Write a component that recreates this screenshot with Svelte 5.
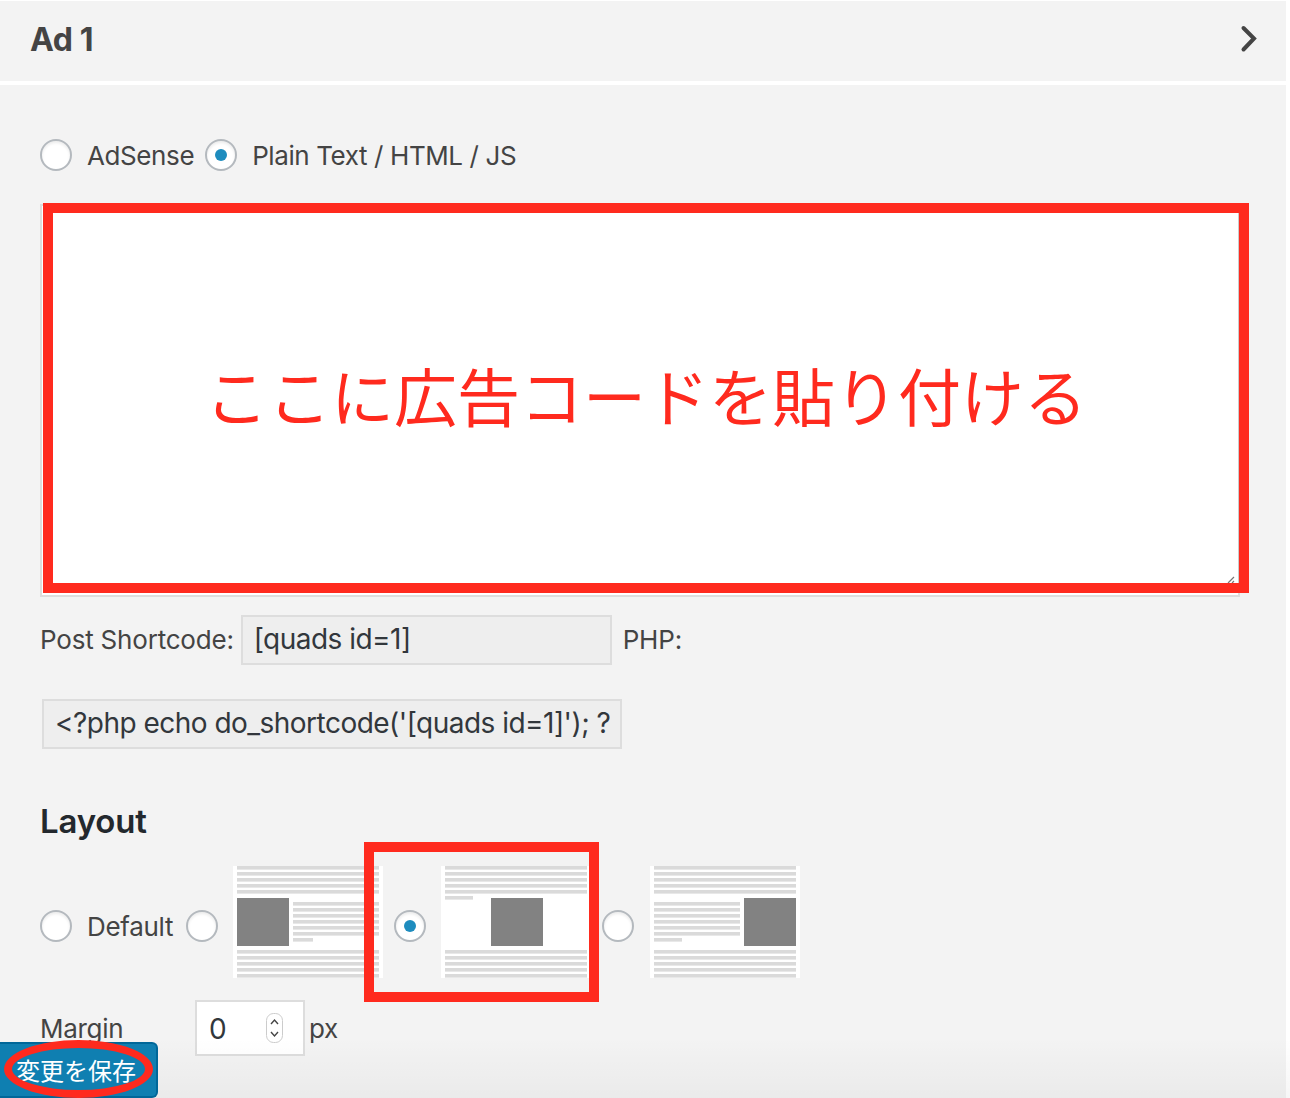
<script lang="ts">
  // line rows inside the 150x112 layout thumbnails
  const topRows = [0, 6, 12, 18, 24];
  const bottomRows = [84, 90, 96, 102, 108];
  const sideRows = [36, 42, 48, 54, 60, 66];
</script>

{#snippet thumb(kind: string)}
  <svg class="thumb" width="150" height="112" viewBox="0 0 150 112">
    <rect width="150" height="112" fill="#fff" />
    {#each topRows as y}
      <rect x="4" {y} width="142" height="3.6" fill="#dadada" />
    {/each}
    {#each bottomRows as y}
      <rect x="4" {y} width="142" height="3.6" fill="#dadada" />
    {/each}
    {#if kind === 'left'}
      <rect x="4" y="32" width="52" height="48" fill="#828282" />
      {#each sideRows as y}
        <rect x="60" {y} width="86" height="3.6" fill="#dadada" />
      {/each}
      <rect x="60" y="72" width="20" height="3.6" fill="#dadada" />
    {:else if kind === 'center'}
      <rect x="4" y="30" width="28" height="3.6" fill="#dadada" />
      <rect x="50" y="32" width="52" height="48" fill="#828282" />
    {:else}
      <rect x="94" y="32" width="52" height="48" fill="#828282" />
      {#each sideRows as y}
        <rect x="4" {y} width="86" height="3.6" fill="#dadada" />
      {/each}
      <rect x="4" y="72" width="28" height="3.6" fill="#dadada" />
    {/if}
  </svg>
{/snippet}

<div class="page">
  <header class="head">
    <h2>Ad 1</h2>
    <svg class="chevron" width="20" height="30" viewBox="0 0 20 30">
      <path d="M4.500 4 L15 14.500 L4.500 25.500" fill="none" stroke="#444" stroke-width="4" stroke-linecap="round" />
    </svg>
  </header>

  <section class="panel">
    <div class="type-row">
      <input type="radio" name="type" />
      <label for="">AdSense</label>
      <input type="radio" name="type" checked />
      <label for="">Plain Text / HTML / JS</label>
    </div>

    <div class="code-wrap">
      <textarea class="code"></textarea>
      <svg class="grip" width="8" height="8" viewBox="0 0 8 8">
        <path d="M1 7 L7 1 M5 7 L7 5" stroke="#777" stroke-width="1.200" />
      </svg>
      <div class="note">ここに広告コードを貼り付ける</div>
    </div>

    <div class="short-row">
      <span>Post Shortcode:</span>
      <input class="ro short" readonly value="[quads id=1]" />
      <span class="php">PHP:</span>
    </div>

    <input class="ro php-code" readonly value={"<?php echo do_shortcode('[quads id=1]'); ?>"} />

    <h3>Layout</h3>

    <div class="layout-row">
      <input type="radio" name="layout" />
      <label for="" class="default">Default</label>
      <input type="radio" name="layout" />
      {@render thumb('left')}
      <input type="radio" name="layout" checked />
      {@render thumb('center')}
      <input type="radio" name="layout" />
      {@render thumb('right')}
      <div class="mark"></div>
    </div>

    <div class="margin-row">
      <span class="margin-label">Margin</span>
      <div class="num">
        <span>0</span>
        <svg width="17" height="30" viewBox="0 0 17 30">
          <rect x="0.500" y="0.500" width="16" height="29" rx="7" fill="#fff" stroke="#ccc" />
          <path d="M5 11 L8.500 7 L12 11 M5 19 L8.500 23 L12 19" fill="none" stroke="#444" stroke-width="1.400" />
        </svg>
      </div>
      <span class="unit">px</span>
    </div>
  </section>

  <div class="fade"></div>

  <div class="save-wrap">
    <button class="save">変更を保存</button>
    <div class="ring"></div>
  </div>
</div>

<style>
  :global(body) {
    margin: 0;
    background: #fff;
    overflow: hidden;
  }

  .page {
    position: relative;
    width: 1290px;
    height: 1098px;
    overflow: hidden;
    padding-top: 1px;
    box-sizing: border-box;
    font-family: Inter, "Noto Sans CJK JP", sans-serif;
    font-size: 26px;
    letter-spacing: -0.3px;
    color: #444;
  }

  .head {
    width: 1286px;
    height: 80px;
    background: #f3f3f3;
    display: flex;
    align-items: center;
    justify-content: space-between;
    box-sizing: border-box;
    padding: 0 27px 4px 30px;
  }

  h2 {
    margin: 0;
    font-size: 32px;
    font-weight: 700;
    letter-spacing: -0.4px;
  }

  .chevron {
    display: block;
  }

  .panel {
    width: 1286px;
    height: 1013px;
    margin-top: 4px;
    background: #f3f3f3;
    box-sizing: border-box;
    padding: 54px 0 0 40px;
  }

  input[type='radio'] {
    appearance: none;
    width: 32px;
    height: 32px;
    margin: 0;
    flex: none;
    border-radius: 50%;
    border: 2px solid #b4b9be;
    background: #fff;
    box-shadow: inset 0 2px 3px rgba(0, 0, 0, 0.08);
    box-sizing: border-box;
    display: flex;
    align-items: center;
    justify-content: center;
  }

  input[type='radio']:checked::before {
    content: '';
    width: 12px;
    height: 12px;
    border-radius: 50%;
    background: #1e8cbe;
  }

  .type-row {
    display: flex;
    align-items: center;
    height: 32px;
    letter-spacing: -0.4px;
  }

  .type-row label {
    margin: 0 11px 0 15px;
  }

  .code-wrap {
    position: relative;
    width: 1200px;
    height: 393px;
    margin-top: 33px;
  }

  .code {
    display: block;
    width: 100%;
    height: 100%;
    box-sizing: border-box;
    border: 2px solid #ddd;
    background: #fff;
    resize: none;
    outline: none;
    margin: 0;
  }

  .grip {
    position: absolute;
    right: 5px;
    bottom: 13px;
  }

  .note {
    position: absolute;
    left: 3px;
    top: -1px;
    width: 1206px;
    height: 390px;
    box-sizing: border-box;
    border: 10px solid #ff2a1e;
    box-shadow: inset -1px 0 0 #ccc;
    display: flex;
    align-items: center;
    justify-content: center;
    color: #ff2a1e;
    font-size: 63px;
    font-weight: 400;
    letter-spacing: 0;
    line-height: 1;
  }

  .short-row {
    display: flex;
    align-items: center;
    height: 50px;
    margin-top: 18px;
  }

  .short-row span {
    letter-spacing: -0.2px;
    margin-top: -1px;
  }

  .ro {
    display: block;
    height: 50px;
    box-sizing: border-box;
    border: 2px solid #ddd;
    background: #eee;
    color: #32373c;
    font-family: inherit;
    font-size: 28px;
    letter-spacing: -0.52px;
    padding: 0 10px 2px 11px;
    margin: 0;
    outline: none;
  }

  .short {
    width: 371px;
    margin-left: 7px;
  }

  .php {
    margin-left: 11px;
  }

  .php-code {
    width: 580px;
    margin: 34px 0 0 2px;
  }

  h3 {
    margin: 53px 0 0;
    height: 38px;
    line-height: 38px;
    font-size: 33px;
    font-weight: 600;
    letter-spacing: -0.2px;
    color: #23282d;
  }

  .layout-row {
    position: relative;
    display: flex;
    align-items: center;
    height: 112px;
    margin-top: 26px;
  }

  .layout-row input[type='radio'],
  .default {
    margin-top: 8px;
  }

  .thumb {
    display: block;
    flex: none;
  }

  .default {
    width: 99px;
    margin-left: 15px;
  }

  .layout-row .thumb:nth-of-type(1) {
    margin: 0 11px 0 15px;
  }

  .layout-row .thumb:nth-of-type(2) {
    margin: 0 11px 0 15px;
  }

  .layout-row .thumb:nth-of-type(3) {
    margin-left: 16px;
  }

  .mark {
    position: absolute;
    left: 324px;
    top: -24px;
    width: 235px;
    height: 160px;
    box-sizing: border-box;
    border: 10px solid #ff2a1e;
  }

  .margin-row {
    display: flex;
    align-items: center;
    height: 56px;
    margin-top: 22px;
  }

  .margin-label {
    width: 155px;
  }

  .num {
    width: 110px;
    height: 56px;
    box-sizing: border-box;
    border: 2px solid #ddd;
    background: #fff;
    color: #32373c;
    font-size: 28px;
    display: flex;
    align-items: center;
    justify-content: space-between;
    padding: 0 20px 0 12px;
  }

  .num span {
    margin-top: 2px;
  }

  .num svg {
    display: block;
  }

  .unit {
    margin-left: 4px;
  }

  .fade {
    position: absolute;
    left: 0;
    bottom: 0;
    width: 100%;
    height: 60px;
    background: linear-gradient(rgba(0, 0, 0, 0), rgba(0, 0, 0, 0.035));
    pointer-events: none;
  }

  .save-wrap {
    position: absolute;
    left: 0;
    bottom: 0;
    width: 158px;
    height: 58px;
  }

  .save {
    position: absolute;
    left: 0;
    bottom: 0;
    width: 158px;
    height: 56px;
    border: 2px solid #006799;
    border-left: 0;
    border-radius: 0 6px 6px 0;
    background: #0f7fb1;
    color: #fff;
    font-family: "Noto Sans CJK JP", sans-serif;
    font-size: 24px;
    letter-spacing: 0;
    padding: 0 4px 2px 0;
  }

  .ring {
    position: absolute;
    left: 4px;
    top: 0;
    width: 149px;
    height: 58px;
    box-sizing: border-box;
    border: 8px solid #ff2a1e;
    border-radius: 50%;
  }
</style>
